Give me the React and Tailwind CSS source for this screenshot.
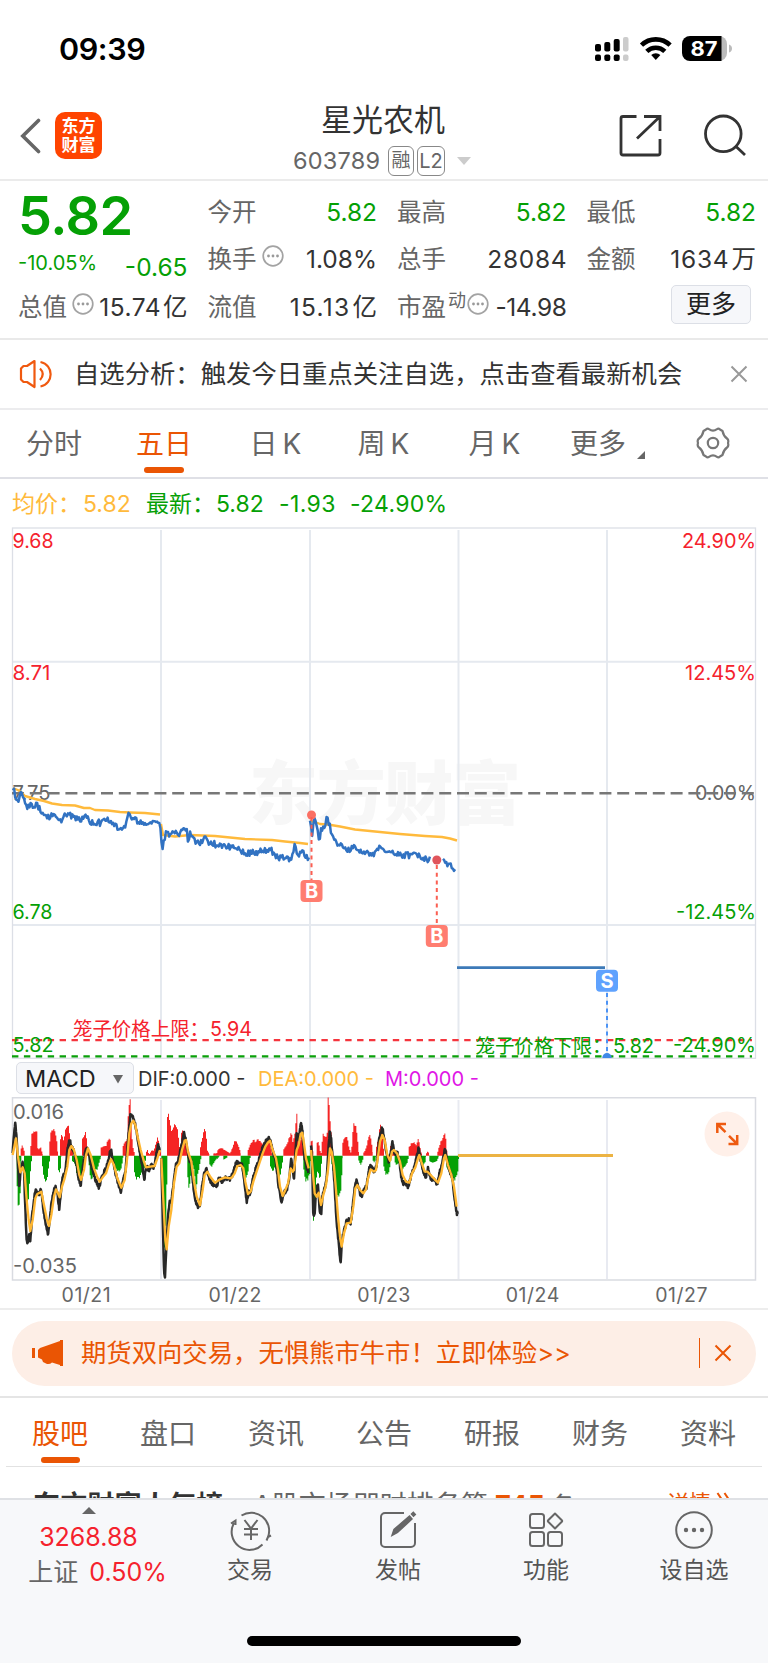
import React from "react";

const ZERO = 197;

/* Series are stored on a 3x grid whose origin is (0, 1090) of the page. */
const toPairs = (s, dx = 0) =>
  s.trim().split(/\s+/).map((p) => {
    const [x, y] = p.split(",").map(Number);
    return [x + dx, y];
  });

const noise = (i) => {
  const v = Math.sin(i * 12.9898) * 43758.5453;
  return (v - Math.floor(v)) * 2 - 1;
};

const interp = (pts, x) => {
  for (let i = 1; i < pts.length; i++) {
    if (x <= pts[i][0]) {
      const [x0, y0] = pts[i - 1];
      const [x1, y1] = pts[i];
      return x1 === x0 ? y1 : y0 + ((y1 - y0) * (x - x0)) / (x1 - x0);
    }
  }
  return pts[pts.length - 1][1];
};

const line = (pts, amp = 0) => {
  const out = [];
  const first = pts[0][0];
  const last = pts[pts.length - 1][0];
  for (let x = first, i = 0; x <= last; x += 1.1, i++) {
    out.push(`${x.toFixed(1)},${(interp(pts, x) + noise(x + i) * amp).toFixed(1)}`);
  }
  return out.join(" ");
};

const poly = (pts) => pts.map((p) => p.join(",")).join(" ");

const bars = (runs, dx) =>
  runs
    .trim()
    .split("|")
    .map((run) => {
      const pts = toPairs(run, dx);
      const end = pts[pts.length - 1][0];
      let d = `M${pts[0][0]},${ZERO}`;
      for (let x = pts[0][0]; x < end; x += 3) {
        const y = interp(pts, x + 1.5);
        const yy = ZERO + (y - ZERO) * (1 + noise(x) * 0.08);
        d += `V${yy.toFixed(1)}H${Math.min(x + 3, end)}`;
      }
      return d + `V${ZERO}Z`;
    })
    .join("");

const redA =
  "62,185 66,163 72,180 74,190|91,185 95,135 100,122 110,122 114,180 122,172 126,185 128,192|148,175 152,122 164,122 170,150 174,190|180,160 184,137 192,150 198,110 204,102 208,130 212,160 216,175 220,190|246,150 252,140 258,128 262,165 266,190|302,175 310,170 318,168 324,150 330,147 334,185 338,192|368,175 374,155 382,150 385,60 388,36 391,36 393,90 396,140 400,180 404,190|438,188 443,180 447,195 456,180 462,182 466,165 471,150 474,140 477,165 480,180 483,190|501,95 505,62 509,100 515,130 522,100 530,105 535,140 540,185 545,115 551,125 556,140 560,180 564,192|600,180 606,150 612,120 618,125 622,180 628,192|640,190 650,190 655,178 665,175 675,180 690,190 700,170 706,155 712,160 718,175 722,190";
const greenA =
  "50,260 54,345 60,345 62,230 64,205|72,225 75,270 78,330 84,365 88,290 92,235 96,200|126,215 130,255 137,272 142,262 146,235 150,200|174,235 178,250 182,230 184,200|216,210 226,225 232,262 240,275 246,245 249,200|266,215 272,268 278,265 282,240 292,238 298,215 303,200|338,215 345,235 352,242 362,242 366,225 370,200|402,240 408,265 420,262 426,240 434,235 438,200|484,240 488,450 494,480 498,380 500,300 502,210|562,240 566,300 571,280 575,210 582,240 588,295 594,250 600,220 604,200|628,220 636,230 644,215 650,205|650,208 658,200|670,210 682,202";
const redB =
  "0,192 5,190 12,155 22,158 28,185 32,192|53,185 62,160 70,150 78,155 84,148 92,155 100,165 110,150 118,145 122,170 126,190|160,180 170,165 180,140 184,125 188,160 194,130 197,130 198,68 201,68 203,130 208,145 212,150 216,140 222,190|242,160 246,145 250,190|260,165 263,152 268,170 273,195 276,160 280,130 286,140 292,130 294,35 297,28 300,90 303,120 306,190|337,160 344,145 350,138 356,165 362,190 366,165 370,110 374,98 380,125 384,160 387,190|400,190 406,180 412,160 418,130 424,155 428,185|438,175 444,150 448,130 450,90 453,115 458,150 462,190|480,175 487,152 491,175 498,190|536,175 544,158 552,155 558,165 564,150 568,155 572,185 576,192|588,192 594,183 598,195|622,190 632,155 640,140 646,132 650,180 652,190";
const greenB =
  "32,215 38,230 46,270 54,245 60,205 62,200|120,225 128,245 134,235 140,245 148,270 154,240 160,200|220,230 226,270 234,268 240,250 243,205|246,300 250,395 255,340 260,250 264,240 270,275 274,230 276,200|304,215 308,240 314,270 320,320 328,322 334,290 338,205|385,210 393,225 400,205|428,210 434,220 438,200|460,225 466,250 474,258 480,230 484,200|494,215 500,225 510,218 516,240 524,232 532,220 536,200|572,210 580,225 586,215 588,200|598,212 608,218 620,215 626,200|649,230 660,245 670,265 676,272 684,240 687,200";

const join = (a, b) => [...toPairs(a), ...toPairs(b, 690)];

const dif1 = toPairs(
  "38,190 42,130 46,95 50,150 54,230 58,285 62,245 68,215 72,240 76,360 80,450 84,458 88,430 91,455 95,390 100,345 106,300 112,310 117,315 122,295 126,320 132,370 138,410 144,432 148,400 154,345 160,310 166,290 172,310 178,360 184,290 190,250 196,245 202,180 208,145 214,170 220,180 228,215 236,265 242,285 250,225 256,180 262,172 268,200 276,235 285,265 297,292 304,265 315,240 322,225 328,195 333,180 340,215 348,255 356,285 362,308 370,265 376,250 380,200 386,130 391,75 397,72 402,90 408,115 415,160 422,200 428,235 433,270 438,225 446,240 455,225 462,235 468,200 475,160 480,185",
);
const dif2 = join(
  "484,200 488,380 492,540 495,566 499,470 504,380 508,340 514,330 520,285 528,225 536,205 544,170 552,130 556,145 562,180 568,215 574,215 580,290 586,335 594,350 600,345 606,290 612,250 618,235 624,250 632,275 640,285 650,290 658,260 665,275 675,265 685,268",
  "3,265 12,240 20,215 28,225 36,225 42,270 50,335 56,305 60,315 68,270 76,240 84,220 92,190 100,170 108,155 116,145 122,155 130,190 138,215 146,290 155,335 162,310 172,295 178,265 184,205 188,235 192,275 195,200 200,130 204,150 209,125 213,95 218,130 222,190 228,225 236,250",
);
const dif3 = toPairs(
  "243,165 246,200 250,380 254,370 258,310 264,280 269,360 274,370 278,310 284,295 290,260 294,200 299,125 303,140 308,200 314,290 320,400 326,460 332,520 336,450 342,425 350,390 356,390 362,400 368,350 374,290 380,270 386,295 394,320 402,300 410,290 416,240 424,225 432,245 440,230 446,160 452,125 457,115 462,140 468,180 476,215 482,190 487,155 494,190 502,190 508,210 514,260 520,280 526,275 534,295 542,260 550,240 558,210 566,175 572,210 580,245 588,262 594,235 602,265 612,270 622,282 630,240 638,215 645,175 652,220 660,245 668,270 674,330 680,370 684,372",
  690,
);
const dea1 = toPairs(
  "38,195 48,145 54,200 61,247 68,232 74,250 80,330 86,390 91,423 98,390 106,325 112,312 124,305 132,345 140,385 147,408 154,375 162,320 168,298 174,310 179,322 186,290 194,265 202,230 208,180 214,168 222,180 230,210 238,255 243,270 252,240 258,195 264,175 272,195 282,235 292,262 299,275 308,262 318,250 326,225 333,207 342,225 352,265 364,293 374,270 382,200 388,130 394,100 400,92 406,105 414,145 422,180 432,215 438,232 450,230 464,228 472,205 480,180",
);
const dea2 = join(
  "484,205 490,330 496,450 500,478 506,410 514,360 522,280 530,230 538,220 546,180 554,152 558,150 564,185 574,215 582,275 590,320 600,346 608,300 614,255 622,245 632,262 645,278 660,268 675,262 690,265",
  "6,262 14,250 22,228 32,225 40,235 46,275 54,312 62,305 70,275 78,250 88,220 98,190 106,170 114,157 120,152 128,180 138,205 144,240 150,290 158,318 166,300 174,280 182,235 188,245 192,240 200,180 206,165 212,132 217,128 222,160 228,205 236,235",
);
const dea3 = toPairs(
  "243,180 248,240 254,310 260,320 266,308 273,345 280,315 288,285 294,240 300,175 305,185 312,230 318,300 324,380 330,440 335,470 342,430 350,400 362,398 370,350 376,295 382,285 390,300 400,310 408,298 414,265 422,238 432,245 438,240 444,200 450,155 457,135 464,150 472,195 480,212 486,185 492,180 502,192 510,215 518,255 528,275 538,278 546,250 556,232 564,205 568,195 574,215 584,245 592,245 602,255 614,268 624,278 634,250 642,205 646,195 654,225 664,255 672,290 680,350",
  690,
);

const price1 = toPairs(
  "13,787 15,795 18,801 20,794 23,797 26,807 30,804 33,805 36,805 40,808 44,817 48,818 52,815 55,818 59,822 63,818 68,814 75,817 80,820 84,816 90,821 97,823 104,822 108,820 113,825 119,828 125,826 128,814 133,820 140,821 147,824 153,824 157,821 160,824 162,848 163,846 166,832 170,836 175,833 179,834 183,828 187,832 188,845 190,832 194,840 200,842 204,838 208,843 215,844 225,847 238,847 245,854 252,853 262,851 268,849 273,852 277,857 285,858 292,858 295,842 298,856 301,850 305,857 309,858",
);
const price2 = toPairs(
  "310,821 312,836 314,820 318,828 319,842 321,829 325,830 327,815 329,823 331,830 336,843 342,846 349,851 353,846 358,850 365,853 373,854 379,846 385,852 392,850 400,855 410,855 418,856 425,859 431,860",
);
const price3 = toPairs("443,857 446,864 450,864 455,870 456,870");

const T = ({ x, y, w, size = 20, fill, anchor = "start", children, weight }) => (
  <text
    x={x}
    y={y + size * 0.364}
    fontSize={size}
    fill={fill}
    fontWeight={weight}
    textAnchor={anchor}
    textLength={w}
    lengthAdjust="spacingAndGlyphs"
  >
    {children}
  </text>
);

const VX = [161, 310, 458.5, 607];

function PriceChart() {
  const red = "#f5222d";
  const green = "#05a005";
  return (
    <svg className="block shrink-0" width="768" height="532" viewBox="0 527 768 532">
      <g fontSize="69" fontWeight="900" fill="#f7f7f7">
        <text x="249" y="819" textLength="272">东方财富</text>
      </g>
      <g stroke="#e5e9ef" strokeWidth="2">
        {VX.map((x) => (
          <line key={x} x1={x} x2={x} y1="530" y2="1057" />
        ))}
        <line x1="13" x2="755" y1="661.7" y2="661.7" />
        <line x1="13" x2="755" y1="925" y2="925" />
      </g>
      <rect x="12.5" y="528" width="743" height="530.3" fill="none" stroke="#dcdfe6" strokeWidth="1.3" />

      <T x={12.5} y={793} w={38} fill="#666">7.75</T>
      <T x={756} y={793} w={61} fill="#666" anchor="end">0.00%</T>
      <line x1="12" x2="755" y1="793.2" y2="793.2" stroke="#777" strokeWidth="2.6" strokeDasharray="12 5.8" />

      <g fill="none" stroke="#ffba3c" strokeWidth="2.4" strokeLinejoin="round">
        <polyline points="13,788 20,791 25,796 35,799 44,801 52,803.5 62,805 75,805.5 84,808 90,808 95,810 108,810.5 120,812 130,812.5 145,813 160,814.5" />
        <polyline points="161,824 163,835 175,836.5 190,835 215,836 245,839 272,840 285,841.5 300,843 308,844" />
        <polyline points="310,821 315,822 320,824 328,824.5 340,826.5 355,829.5 380,832 400,834 425,836 442,837 450,838.5 457,840.5" />
      </g>
      <g fill="none" stroke="#3172c2" strokeWidth="2.5" strokeLinejoin="round">
        <polyline points={line(price1, 3.3)} />
        <polyline points={line(price2, 3.3)} />
        <polyline points={line(price3, 2.5)} />
        <line x1="457" x2="605" y1="967.6" y2="967.6" stroke="#3d7ab8" strokeWidth="2.6" />
      </g>

      <T x={12.5} y={540.5} w={41} fill={red}>9.68</T>
      <T x={756} y={540.5} w={74} fill={red} anchor="end">24.90%</T>
      <T x={12.5} y={673} w={38} fill={red}>8.71</T>
      <T x={756} y={673} w={71} fill={red} anchor="end">12.45%</T>
      <T x={12.5} y={912} w={40} fill={green}>6.78</T>
      <T x={756} y={912} w={80} fill={green} anchor="end">-12.45%</T>

      <line x1="12" x2="752" y1="1040.2" y2="1040.2" stroke="#f5353d" strokeWidth="2.2" strokeDasharray="6.4 5.5" />
      <line x1="12" x2="752" y1="1056.4" y2="1056.4" stroke="#0aa00a" strokeWidth="2.2" strokeDasharray="6.4 5.5" />
      <T x={12.5} y={1045} w={41} fill={green}>5.82</T>
      <T x={73} y={1029} w={136} size={19.4} fill={red}>笼子价格上限：</T>
      <T x={210} y={1029} w={42} fill={red}>5.94</T>
      <T x={475.5} y={1045.5} w={136} size={19.4} fill={green}>笼子价格下限：</T>
      <T x={613} y={1045.5} w={41} fill={green}>5.82</T>
      <T x={756} y={1045} w={83} fill={green} anchor="end">-24.90%</T>

      <g fontSize="20" fontWeight="700" textAnchor="middle">
        <circle cx="311.5" cy="815" r="4.5" fill="#fb7064" />
        <line x1="311.5" x2="311.5" y1="817" y2="880" stroke="#fb5f52" strokeWidth="2" strokeDasharray="4 3.7" />
        <rect x="300.5" y="880" width="22" height="22" rx="4" fill="#ff7d70" />
        <text x="311.5" y="898.3" fill="#fff">B</text>
        <circle cx="436.8" cy="860" r="4.5" fill="#e0555c" />
        <line x1="436.8" x2="436.8" y1="865" y2="925" stroke="#fb5f52" strokeWidth="2" strokeDasharray="4 3.7" />
        <rect x="425.8" y="925" width="22" height="22" rx="4" fill="#ff7d70" />
        <text x="436.8" y="943.3" fill="#fff">B</text>
        <line x1="607" x2="607" y1="993" y2="1053" stroke="#4c93f5" strokeWidth="2" strokeDasharray="4 3.7" />
        <path d="M602.3 1058a4.7 5 0 0 1 9.400 0z" fill="#3f88e8" />
        <rect x="596" y="969.7" width="22" height="22" rx="4" fill="#5fa2fe" />
        <text x="607" y="988" fill="#fff">S</text>
      </g>
    </svg>
  );
}

function MacdChart() {
  return (
    <svg className="block shrink-0" width="768" height="184" viewBox="0 1097 768 184">
      <g stroke="#e8eaf1" strokeWidth="2">
        {VX.map((x) => (
          <line key={x} x1={x} x2={x} y1="1100" y2="1279" />
        ))}
      </g>
      <path d="M12.5 1280V1097.800H755.500V1280z" fill="none" stroke="#d9dbe1" strokeWidth="1.5" />
      <svg x="0" y="1090" width="768" height="190" viewBox="0 0 2304 570">
        <path d={bars(redA, 0) + bars(redB, 690)} fill="#f52424" />
        <path d={bars(greenA, 0) + bars(greenB, 690)} fill="#05a005" />
        <g fill="none" strokeLinejoin="round">
          <g stroke="#282828" strokeWidth="7.5">
            <polyline points={line(dif1, 6)} />
            <polyline points={line(dif2, 6)} />
            <polyline points={line(dif3, 6)} />
          </g>
          <g stroke="#ffb732" strokeWidth="7">
            <polyline points={poly(dea1)} />
            <polyline points={poly(dea2)} />
            <polyline points={poly(dea3)} />
          </g>
        </g>
      </svg>
      <line x1="458" x2="613" y1="1155.6" y2="1155.6" stroke="#ecb343" strokeWidth="3" />
      <T x={13} y={1112} w={51} fill="#666">0.016</T>
      <T x={13} y={1265.7} w={64} fill="#666">-0.035</T>
      <circle cx="727" cy="1134" r="22.5" fill="#fff0e9" />
      <g stroke="#ee5a10" strokeWidth="2.500" fill="none">
        <path d="M726 1124h-8.700v9M717.300 1124l8.200 8.200M728.500 1144h8.700v-9M737.200 1144l-8.200-8.200" />
      </g>
    </svg>
  );
}

const Info = ({ className }) => (
  <svg className={`shrink-0 ${className}`} width="22" height="22" viewBox="0 0 22 22">
    <circle cx="11" cy="11" r="9.800" fill="none" stroke="#a3a3a3" strokeWidth="1.700" />
    <g fill="#999">
      <circle cx="6.500" cy="11" r="1.400" />
      <circle cx="11" cy="11" r="1.400" />
      <circle cx="15.500" cy="11" r="1.400" />
    </g>
  </svg>
);

const Close = ({ className }) => (
  <svg className={className} width="18" height="18" viewBox="0 0 18 18" fill="none" stroke="currentColor" strokeWidth="2">
    <path d="M1.500 1.500l15 15M16.500 1.500l-15 15" />
  </svg>
);

const Cell = ({ label, value, unit, extra, green, track = "" }) => (
  <div className="flex h-[47px] items-center whitespace-nowrap">
    <span className="text-[24.500px] text-[#666]">{label}</span>
    {extra}
    <span className={`ml-auto text-[24.500px] ${green ? "text-[#05a005]" : "text-[#333]"}`}>
      <span className={track}>{value}</span>
      {unit && <span className="ml-[2px]">{unit}</span>}
    </span>
  </div>
);

function StatusBar() {
  return (
    <div className="flex h-[98px] shrink-0 items-center pl-[59px] pr-[35px]">
      <span className="text-[30.500px] font-semibold leading-none tracking-[-0.400px]">09:39</span>
      <svg className="ml-auto" width="138" height="26" viewBox="595 36 138 26">
        <g>
          <rect x="595" y="44" width="6" height="7.500" rx="2" />
          <rect x="604.300" y="42" width="6" height="9.500" rx="2" />
          <rect x="613.700" y="39" width="6" height="12.500" rx="2" />
          <rect x="623" y="37" width="5.500" height="14.500" rx="2" fill="#ccc" />
          <rect x="595" y="54.500" width="6" height="6.500" rx="2" />
          <rect x="604.300" y="54.500" width="6" height="6.500" rx="2" />
          <rect x="613.700" y="54.500" width="6" height="6.500" rx="2" />
          <rect x="623" y="54.500" width="5.500" height="6.500" rx="2" fill="#ccc" />
        </g>
        <g fill="none" stroke="#000" strokeWidth="4.600">
          <path d="M641.500 45.200a20.500 20.500 0 0 1 28.600 0" />
          <path d="M646.800 51.300a13 13 0 0 1 18 0" />
        </g>
        <path d="M655.800 60l-4.600-5a6.600 6.600 0 0 1 9.200 0z" />
        <path d="M690 36h29a8 8 0 0 1 8 8v9a8 8 0 0 1-8 8h-29z" fill="#bbb" />
        <path d="M690 36h31.500v25H690a8 8 0 0 1-8-8v-9a8 8 0 0 1 8-8z" />
        <path d="M729 44.500q3 1 3 4t-3 4z" fill="#bbb" />
        <text x="704" y="55.800" fontSize="20" fontWeight="700" fill="#fff" textAnchor="middle" textLength="27" lengthAdjust="spacingAndGlyphs">87</text>
      </svg>
    </div>
  );
}

function Header() {
  return (
    <div className="flex h-[83px] shrink-0 items-start border-b-2 border-[#ebebeb] pl-[20px] pr-[21px]">
      <svg className="mt-[20px]" width="21" height="36" viewBox="0 0 21 36" fill="none" stroke="#666" strokeWidth="3.600" strokeLinecap="round">
        <path d="M18.500 2.500L2.800 18l15.700 15.500" />
      </svg>
      <div className="ml-[14px] mt-[14px] flex h-[47px] w-[47px] flex-col items-center justify-center rounded-[10px] bg-[#ff4400] text-[17px] font-bold leading-[19px] text-white">
        <span>东方</span>
        <span>财富</span>
      </div>
      <div className="ml-[191px] flex w-[180px] flex-col">
        <div className="mt-[4px] pl-[28px] text-[31px] leading-[36px] text-[#333]">星光农机</div>
        <div className="mt-[7px] flex h-[32px] items-center text-[#666]">
          <span className="w-[95px] text-[23.500px] tracking-[0.200px]">603789</span>
          <span className="flex h-[30px] w-[26px] items-center justify-center rounded-[6px] border-[1.500px] border-[#888] text-[19px]">融</span>
          <span className="ml-[3px] flex h-[30px] w-[28px] items-center justify-center rounded-[6px] border-[1.500px] border-[#888] text-[20px]">L2</span>
          <svg className="ml-[12px]" width="14" height="8" viewBox="0 0 14 8">
            <path d="M0 0h14L7 8z" fill="#ccc" />
          </svg>
        </div>
      </div>
      <svg className="ml-auto mt-[16px]" width="128" height="44" viewBox="620 114 128 44" fill="none" stroke="#333" strokeWidth="2.800">
        <path d="M637.500 116.500H624a2 2 0 0 0-2 2V153a2 2 0 0 0 2 2h35a2 2 0 0 0 2-2v-14M645 116.500h16V131M661 116.500L638 138.500" />
        <circle cx="724.300" cy="133.800" r="17.800" />
        <path d="M736.500 146l9.500 9" />
      </svg>
    </div>
  );
}

function Quote() {
  return (
    <div className="grid h-[159px] shrink-0 grid-cols-4 gap-x-5 border-b-2 border-[#e9e9e9] pl-[18px] pr-[12px] pt-[8px]">
      <div>
        <div className="h-[54px] text-[54px] font-semibold leading-[54px] tracking-[-0.500px] text-[#05a005]">5.82</div>
        <div className="flex h-[40px] items-center justify-between text-[#05a005]">
          <span className="text-[20px]">-10.05%</span>
          <span className="pt-2 text-[24.500px]">-0.65</span>
        </div>
        <div className="pt-px">
          <Cell label="总值" value="15.74" unit="亿" track="tracking-[0.500px]" extra={<Info className="mb-2 ml-[5px]" />} />
        </div>
      </div>
      <div>
        <Cell label="今开" value="5.82" green />
        <Cell label="换手" value="1.08%" extra={<Info className="mb-2 ml-[5px]" />} />
        <div className="pt-px">
          <Cell label="流值" value="15.13" unit="亿" track="tracking-[1.300px]" />
        </div>
      </div>
      <div>
        <Cell label="最高" value="5.82" green />
        <Cell label="总手" value={<span className="-mr-[0.800px]">28084</span>} track="tracking-[0.700px]" />
        <div className="pt-px">
          <Cell
            label="市盈"
            value="-14.98"
            track="tracking-[-0.400px]"
            extra={
              <>
                <span className="mb-3.5 ml-[2px] text-[18px] text-[#666]">动</span>
                <Info className="mb-2 ml-px" />
              </>
            }
          />
        </div>
      </div>
      <div>
        <Cell label="最低" value="5.82" green />
        <Cell label="金额" value="1634" unit="万" track="tracking-[0.800px]" />
        <div className="flex h-[47px] justify-end pr-[5px]">
          <div className="mt-[2px] flex h-[39px] w-[80px] items-center justify-center rounded-[5px] border-[1.500px] border-[#dcdfe6] bg-[#f6f7fa] text-[25px] text-[#222]">更多</div>
        </div>
      </div>
    </div>
  );
}

function Notice() {
  return (
    <div className="flex h-[70px] shrink-0 items-center border-b-2 border-[#ececee] pl-[19px] pr-[20px]">
      <svg width="35" height="30" viewBox="0 0 35 30" fill="none" stroke="#f0590f" strokeWidth="2.200">
        <path d="M15.500 2L8 7H4.500L2 9.500v11L4.500 23H8l7.500 5z" strokeLinejoin="round" />
        <path d="M21 9.500q5.500 5.500 0 11.500M21.500 3C35 6 35 24.500 21.500 27.500" />
      </svg>
      <span className="ml-[20px] whitespace-nowrap text-[25.350px] text-[#333]">自选分析：触发今日重点关注自选，点击查看最新机会</span>
      <Close className="ml-auto text-[#999]" />
    </div>
  );
}

function PeriodTabs() {
  const items = [
    ["分时", "w-[108px]"],
    ["五日", "w-[112px]"],
    ["日K", "w-[116px] tracking-[5px]"],
    ["周K", "w-[100px] tracking-[5px]"],
    ["月K", "w-[122px] tracking-[5px]"],
  ];
  return (
    <div className="flex h-[69px] shrink-0 border-b-2 border-[#dfe0e6] text-[28px] text-[#666]">
      {items.map(([t, w], i) => (
        <div key={t} className={`flex flex-col items-center ${w} ${i === 1 ? "text-[#ea5504]" : ""}`}>
          <span className="mt-[13px] leading-[42px]">{t}</span>
          {i === 1 && <span className="mt-[2px] h-[6px] w-[40px] rounded-[3px] bg-[#ea5504]" />}
        </div>
      ))}
      <div className="flex w-[138px] pl-[12px]">
        <span className="mt-[13px] leading-[42px]">更多</span>
        <svg className="ml-[11px] mt-[41px]" width="8" height="8" viewBox="0 0 8 8">
          <path d="M8 0v8H0z" fill="#666" />
        </svg>
      </div>
      <svg className="mt-[17px]" width="34" height="32" viewBox="0 0 34 32" fill="none" stroke="#777" strokeWidth="2.200" strokeLinejoin="round">
        <path d="M10 2.500Q11.500 1 13 2.200Q17 5 21 2.200Q22.500 1 24 2.500L26.500 4Q27.500 9 31 11.500Q33 13 32 16Q33 19 31 20.500Q27.500 23 26.500 28L24 29.500Q22.500 31 21 29.800Q17 27 13 29.800Q11.500 31 10 29.500L7.500 28Q6.500 23 3 20.500Q1 19 2 16Q1 13 3 11.500Q6.500 9 7.500 4Z" />
        <circle cx="17" cy="16" r="5.200" />
      </svg>
    </div>
  );
}

function AverageRow() {
  return (
    <div className="flex h-[48px] shrink-0 items-center whitespace-nowrap pl-[12px] pt-[3px] text-[23px] text-[#05a005]">
      <span className="w-[71px] text-[#ffba3c]">均价：</span>
      <span className="w-[63px] text-[#ffba3c]">5.82</span>
      <span className="w-[70px]">最新：</span>
      <span className="w-[63px]">5.82</span>
      <span className="w-[71px] tracking-[0.400px]">-1.93</span>
      <span className="tracking-[0.300px]">-24.90%</span>
    </div>
  );
}

function MacdRow() {
  return (
    <div className="flex h-[38px] shrink-0 items-center whitespace-nowrap pl-[16px] text-[20px]">
      <div className="flex h-[32px] w-[118px] items-center rounded-[5px] border-[1.500px] border-[#dcdfe6] bg-[#f6f7fa] pl-[8px] pt-[2px] text-[23.500px] text-[#222]">
        <span className="w-[88px]">MACD</span>
        <svg width="10" height="9" viewBox="0 0 10 9">
          <path d="M0 0h10L5 8.500z" fill="#666" />
        </svg>
      </div>
      <span className="ml-[4px] w-[120px] pt-[2px] text-[#333]">DIF:0.000 -</span>
      <span className="w-[127px] pt-[2px] text-[#ffba3c]">DEA:0.000 -</span>
      <span className="pt-[2px] text-[#e016e6]">M:0.000 -</span>
    </div>
  );
}

function Banner() {
  return (
    <div className="flex h-[88px] shrink-0 items-center border-b-2 border-[#e5e5e5] px-3">
      <div className="flex h-[65px] w-full items-center rounded-full bg-[#fdeee6] pl-[20px] pr-[24px] text-[#ea5504]">
        <svg width="31" height="26" viewBox="0 0 31 26" fill="#ea5504">
          <path d="M0 8h3v10H0zM6 10l2-2 20-7V0h3v26h-3v-1l-8-2.500q-2 2-5 1.500l-4-2-1-2.500-4-2z" />
        </svg>
        <span className="ml-[18px] whitespace-nowrap text-[25.350px]">期货双向交易，无惧熊市牛市！立即体验&gt;&gt;</span>
        <span className="ml-auto h-[30px] w-[1.500px] bg-[#ea5504]" />
        <Close className="ml-[14px]" />
      </div>
    </div>
  );
}

function SectionTabs() {
  return (
    <div className="mx-[6px] grid h-[69px] shrink-0 grid-cols-7 border-b-[1.500px] border-[#e2e2e2] text-[28px] text-[#666]">
      {["股吧", "盘口", "资讯", "公告", "研报", "财务", "资料"].map((t, i) => (
        <div key={t} className={`flex flex-col items-center ${i === 0 ? "text-[#ea5504]" : ""}`}>
          <span className="mt-[15px] leading-[42px]">{t}</span>
          {i === 0 && <span className="mt-[2px] h-[6px] w-[39px] rounded-[3px] bg-[#ea5504]" />}
        </div>
      ))}
    </div>
  );
}

function RankRow() {
  return (
    <div className="flex h-[31px] shrink-0 items-start overflow-hidden whitespace-nowrap pl-[33px] pt-[19px] text-[27.200px] leading-[40px] text-[#666]">
      <span className="w-[220px] font-bold text-[#333]">东方财富人气榜</span>
      <span className="w-[242px] text-[27px]">A股市场即时排名第</span>
      <span className="w-[55px] font-bold text-[#ea5504]">745</span>
      <span className="w-[117px] text-[25px]">名</span>
      <span className="text-[22px] leading-[34px] text-[#ea5504]">详情</span>
      <svg className="ml-[5px] mt-[6px]" width="16" height="20" viewBox="0 0 16 20" fill="none" stroke="#ea5504" strokeWidth="2">
        <path d="M1.500 1l6 9-6 9M8.500 1l6 9-6 9" />
      </svg>
    </div>
  );
}

const NavItem = ({ label, children }) => (
  <div className="flex w-[148px] flex-col items-center pt-[8px]">
    <svg width="44" height="44" viewBox="0 0 44 44" fill="none" stroke="#666" strokeWidth="2">
      {children}
    </svg>
    <span className="mt-px text-[23px] leading-[34px] text-[#555]">{label}</span>
  </div>
);

function BottomBar() {
  return (
    <div className="flex h-[165px] shrink-0 flex-col border-t-2 border-[#dfe1e5] bg-[#f7f8fa]">
      <div className="flex h-[136px]">
        <div className="flex w-[176px] flex-col items-center pl-px pt-[7px]">
          <svg width="14" height="7" viewBox="0 0 14 7">
            <path d="M7 0l7 7H0z" fill="#666" />
          </svg>
          <span className="mt-[8px] text-[25px] leading-[30px] text-[#f5222d]">3268.88</span>
          <div className="mt-[3px] flex gap-[11px] pl-[18px] text-[25px] leading-[34px]">
            <span className="text-[#666]">上证</span>
            <span className="text-[#f5222d]">0.50%</span>
          </div>
        </div>
        <NavItem label="交易">
          <path d="M12.500 7.500A18 18 0 0 1 39 29l3-1.500M39 29l-1.500 3.500M33.500 36.500A18 18 0 0 1 5 15M2 15.500L6.500 12.500V17" transform="translate(1 0)" />
          <path d="M16.500 12l6.500 8.500 6.500-8.500M23 20.500V32M16 21h14M16 26.500h14" />
        </NavItem>
        <NavItem label="发帖">
          <path d="M28 5H9a4 4 0 0 0-4 4v26a4 4 0 0 0 4 4h26a4 4 0 0 0 4-4V15" />
          <path d="M16 27.500l2-6L33.500 8l2.500 3-14.500 13.500zM35.500 6l1.800-1.700 2 2.200-1.800 1.700z" fill="#666" stroke="#666" strokeWidth="1.500" />
        </NavItem>
        <NavItem label="功能">
          <rect x="6" y="6" width="14" height="14" rx="2.500" />
          <rect x="6" y="24" width="14" height="14" rx="2.500" />
          <rect x="24" y="24" width="14" height="14" rx="2.500" />
          <path d="M31 5.500l6.800 6.800a1 1 0 0 1 0 1.400L31 20.500l-6.800-6.800a1 1 0 0 1 0-1.400z" strokeLinejoin="round" />
        </NavItem>
        <NavItem label="设自选">
          <circle cx="22" cy="22" r="17.800" />
          <g fill="#666" stroke="none">
            <circle cx="14" cy="22" r="2.200" />
            <circle cx="22" cy="22" r="2.200" />
            <circle cx="30" cy="22" r="2.200" />
          </g>
        </NavItem>
      </div>
      <div className="mx-auto h-[10px] w-[274px] rounded-full bg-black" />
    </div>
  );
}

export default function App() {
  return (
    <div className="flex h-[1663px] w-[768px] flex-col overflow-hidden bg-white font-[Inter,'Noto_Sans_CJK_SC',sans-serif] text-black">
      <StatusBar />
      <Header />
      <Quote />
      <Notice />
      <PeriodTabs />
      <AverageRow />
      <PriceChart />
      <MacdRow />
      <MacdChart />
      <div className="grid h-[29px] shrink-0 grid-cols-5 items-center border-b-2 border-[#ededed] px-3 text-center text-[19.500px] tracking-[0.500px] text-[#666]">
        {["01/21", "01/22", "01/23", "01/24", "01/27"].map((d) => (
          <span key={d}>{d}</span>
        ))}
      </div>
      <Banner />
      <SectionTabs />
      <RankRow />
      <BottomBar />
    </div>
  );
}
